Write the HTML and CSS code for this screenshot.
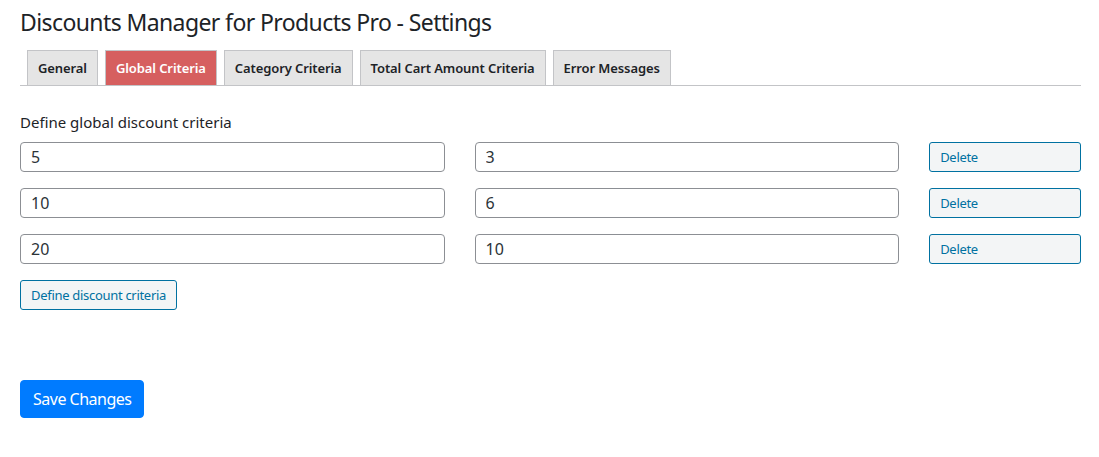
FILE: index.html
```
<!DOCTYPE html>
<html>
<head>
<meta charset="utf-8">
<link rel="stylesheet" href="styles.css">
</head>
<body>
<div class="wrap">
  <h1 class="title">Discounts Manager for Products Pro - Settings</h1>
  <nav class="tabs">
    <a class="tab">General</a>
    <a class="tab active">Global Criteria</a>
    <a class="tab">Category Criteria</a>
    <a class="tab">Total Cart Amount Criteria</a>
    <a class="tab">Error Messages</a>
  </nav>
  <div class="section">
    <p class="label">Define global discount criteria</p>
    <div class="row">
      <div class="col5"><input class="field" type="text" value="5"></div>
      <div class="col5"><input class="field" type="text" value="3"></div>
      <div class="col2"><button class="btn-sec wide">Delete</button></div>
    </div>
    <div class="row">
      <div class="col5"><input class="field" type="text" value="10"></div>
      <div class="col5"><input class="field" type="text" value="6"></div>
      <div class="col2"><button class="btn-sec wide">Delete</button></div>
    </div>
    <div class="row">
      <div class="col5"><input class="field" type="text" value="20"></div>
      <div class="col5"><input class="field" type="text" value="10"></div>
      <div class="col2"><button class="btn-sec wide">Delete</button></div>
    </div>
    <button class="btn-sec">Define discount criteria</button>
  </div>
  <div class="submit">
    <button class="btn-primary">Save Changes</button>
  </div>
</div>
</body>
</html>
```
FILE: styles.css
```
* { box-sizing: border-box; }
body {
  margin: 0;
  background: #ffffff;
  font-family: "Noto Sans", "Open Sans", sans-serif;
  color: #1d2327;
}
.wrap {
  padding: 0 18px 0 20px;
}
.title {
  margin: 0;
  padding-top: 7px;
  font-size: 23px;
  font-weight: 400;
  line-height: 30px;
  letter-spacing: -0.6px;
  color: #1d2327;
}
.tabs {
  display: flex;
  margin-top: 13px;
  padding-left: 7px;
  border-bottom: 1px solid #c3c4c7;
  gap: 7px;
}
.tab {
  display: block;
  padding: 5px 10px;
  font-size: 13px;
  font-weight: 600;
  line-height: 24px;
  letter-spacing: -0.1px;
  background: #e5e5e5;
  border: 1px solid #c3c4c7;
  border-bottom: none;
  color: #1d2327;
  height: 35px;
}
.tab.active {
  background: #d65f5f;
  color: #ffffff;
  border-color: #c3c4c7;
}
.section {
  padding-top: 26px;
}
.label {
  margin: 0 0 10px;
  font-size: 15px;
  line-height: 20px;
}
.row {
  display: flex;
  margin: 0 -15px 16px;
}
.col5 {
  flex: 0 0 41.6667%;
  padding: 0 15px;
}
.col2 {
  flex: 0 0 16.6667%;
  padding: 0 15px;
}
.field {
  display: block;
  width: 100%;
  height: 30px;
  margin: 0;
  padding: 0 10px;
  font-family: inherit;
  font-size: 16px;
  color: #2c3338;
  border: 1px solid #8c8f94;
  border-radius: 4px;
  background: #fff;
}
.btn-sec {
  display: block;
  height: 30px;
  margin: 0;
  padding: 0 10px;
  font-family: inherit;
  font-size: 13px;
  line-height: 28px;
  letter-spacing: -0.3px;
  color: #0071a1;
  background: #f3f5f6;
  border: 1px solid #0071a1;
  border-radius: 3px;
  text-align: left;
}
.btn-sec.wide {
  width: 100%;
}
.submit {
  padding-top: 70px;
}
.btn-primary {
  display: block;
  height: 38px;
  padding: 0 12px;
  font-family: inherit;
  font-size: 16px;
  line-height: 36px;
  letter-spacing: -0.5px;
  color: #ffffff;
  background: #007bff;
  border: 1px solid #007bff;
  border-radius: 4px;
}
```
